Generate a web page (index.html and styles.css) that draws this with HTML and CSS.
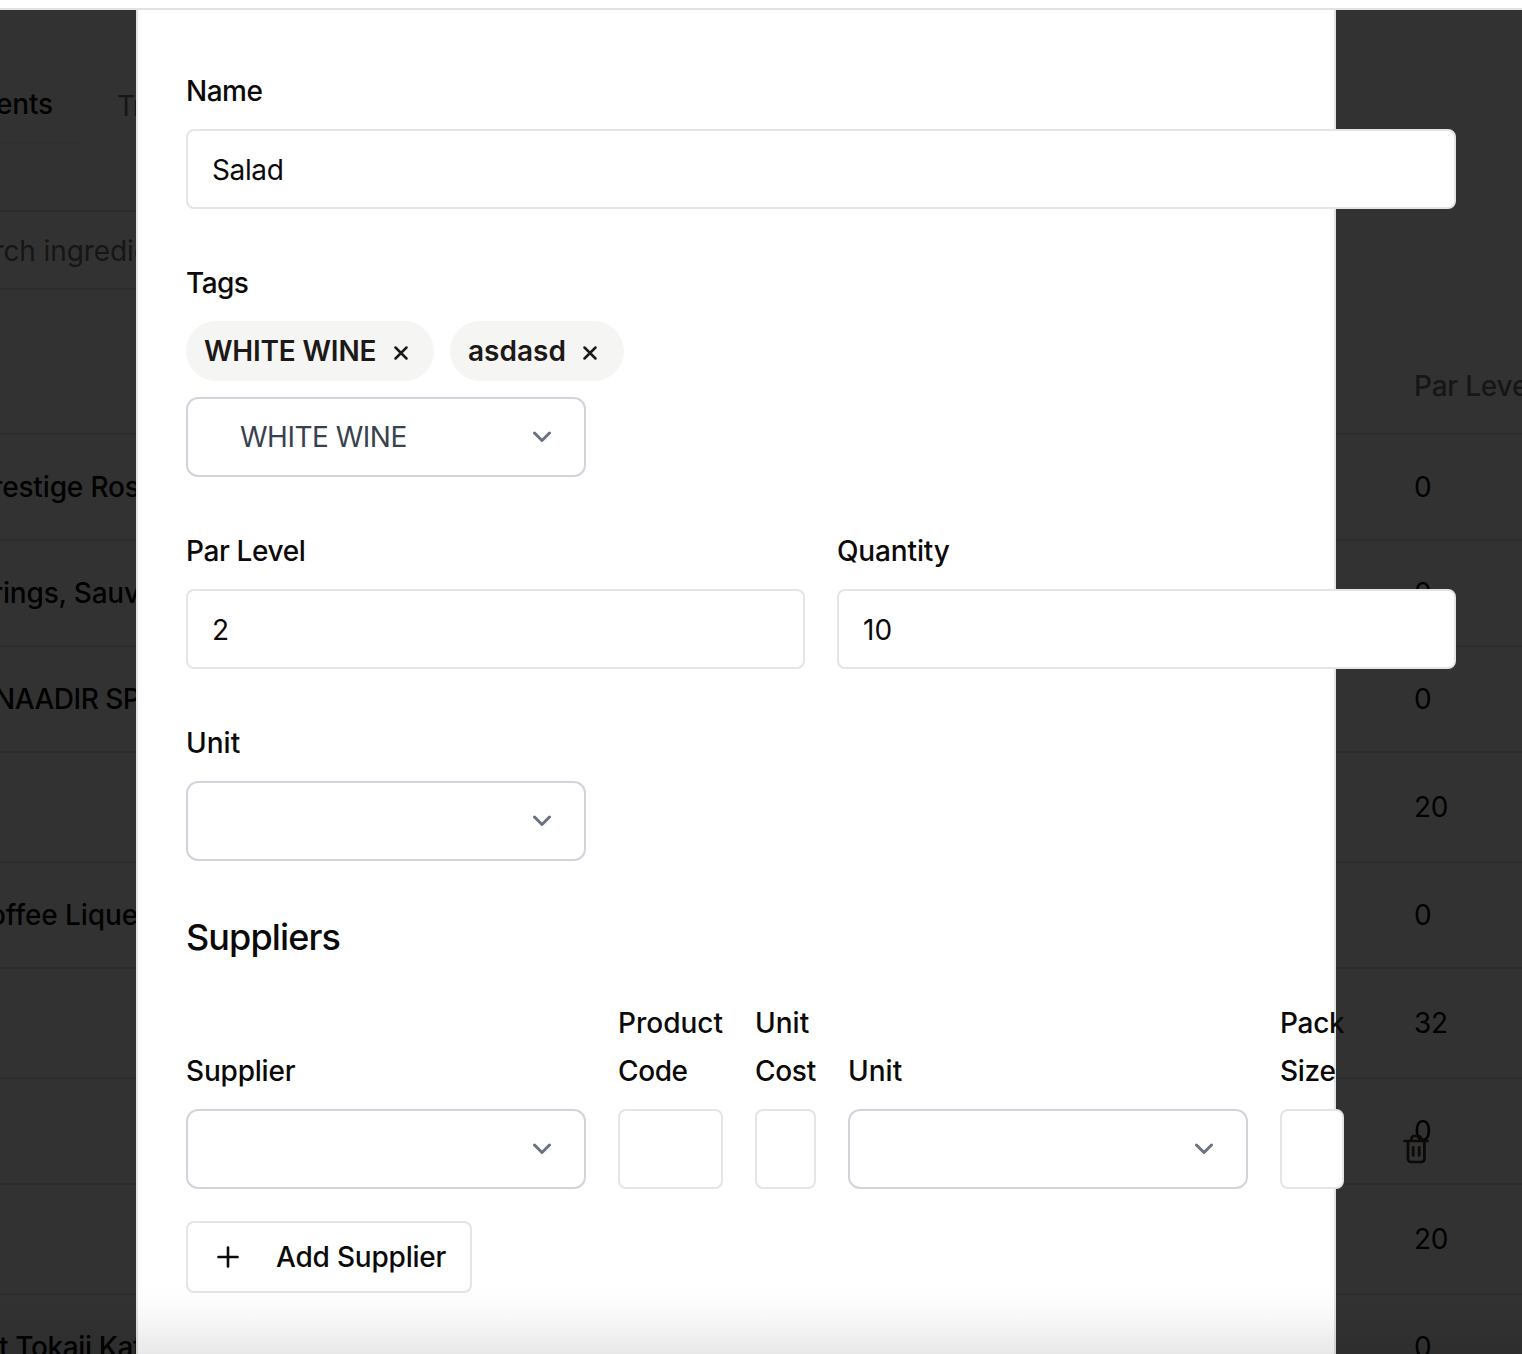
FILE: index.html
```html
<!DOCTYPE html>
<html lang="en">
<head>
<meta charset="utf-8">
<title>Edit ingredient</title>
<link rel="stylesheet" href="styles.css">
</head>
<body>
<header class="topbar"></header>
<div class="stage">
  <main class="page">
    <nav class="tabs"><span class="tab tab-active">ents</span><span class="tab tab-next">Tr</span></nav>
    <div class="search">rch ingredie</div>
    <div class="table">
      <div class="row head"><span></span><span>Par Level</span></div>
      <div class="row"><span class="cell c1">restige Ros</span><span class="num">0</span></div>
      <div class="row"><span class="cell c2">rings, Sauv</span><span class="num">0</span></div>
      <div class="row"><span class="cell c3">NAADIR SP</span><span class="num">0</span></div>
      <div class="row tall"><span></span><span class="num">20</span></div>
      <div class="row"><span class="cell c4">offee Lique</span><span class="num">0</span></div>
      <div class="row tall"><span></span><span class="num">32</span></div>
      <div class="row"><span></span><span class="num">0</span></div>
      <div class="row tall"><span></span><span class="num">20</span></div>
      <div class="row"><span class="cell c5">t Tokaji Kat</span><span class="num">0</span></div>
    </div>
  </main>
  <div class="overlay"></div>
  <section class="dialog">
    <form class="form">
      <div class="field">
        <label class="ls-5">Name</label>
        <div class="input ls-4">Salad</div>
      </div>
      <div class="field">
        <label class="ls-6">Tags</label>
        <div class="chips">
          <span class="chip"><span class="ls-2">WHITE WINE</span><svg class="x" viewBox="0 0 14 14"><path d="M1.500 1.500 12.500 12.500M12.500 1.500 1.500 12.500"/></svg></span>
          <span class="chip"><span>asdasd</span><svg class="x" viewBox="0 0 14 14"><path d="M1.500 1.500 12.500 12.500M12.500 1.500 1.500 12.500"/></svg></span>
        </div>
        <div class="select"><span class="ls-5">WHITE WINE</span><svg class="chev" viewBox="0 0 20 12"><path d="M2.500 2 10 9.500 17.500 2"/></svg></div>
      </div>
      <div class="pair">
        <div class="field">
          <label class="ls-4">Par Level</label>
          <div class="input">2</div>
        </div>
        <div class="field">
          <label class="ls-1">Quantity</label>
          <div class="input">10</div>
        </div>
      </div>
      <div class="field">
        <label>Unit</label>
        <div class="select"><svg class="chev" viewBox="0 0 20 12"><path d="M2.500 2 10 9.500 17.500 2"/></svg></div>
      </div>
      <h2>Suppliers</h2>
      <div class="supplier">
        <div class="field"><label class="ls-2">Supplier</label><div class="select"><svg class="chev" viewBox="0 0 20 12"><path d="M2.500 2 10 9.500 17.500 2"/></svg></div></div>
        <div class="field"><label>Product<br><span class="ls-4">Code</span></label><div class="input"></div></div>
        <div class="field"><label>Unit<br><span class="ls-3">Cost</span></label><div class="input"></div></div>
        <div class="field"><label>Unit</label><div class="select"><svg class="chev" viewBox="0 0 20 12"><path d="M2.500 2 10 9.500 17.500 2"/></svg></div></div>
        <div class="field"><label class="ls-3">Pack<br>Size</label><div class="input"></div></div>
        <div class="remove"><svg class="trash" viewBox="0 0 28 32"><path d="M2.600 8h23M6 8v18a3 3 0 0 0 3 3h10.400a3 3 0 0 0 3-3V8M9.300 7.500V6a3 3 0 0 1 3-3h4.100a3 3 0 0 1 3 3v1.500M11.200 14.400v8M17.200 14.400v8"/></svg></div>
      </div>
      <div class="add"><svg class="plus" viewBox="0 0 24 24"><path d="M12 2.500v19M2.500 12h19"/></svg><span class="ls-2">Add Supplier</span></div>
    </form>
  </section>
  <div class="fade"></div>
</div>
</body>
</html>
```
FILE: styles.css
```css
* { box-sizing: border-box; }
body {
  margin: 0;
  height: 1354px;
  overflow: hidden;
  background: #fff;
  color: #0c0a09;
  font: 400 28px/48px Inter, "Liberation Sans", sans-serif;
}

/* tracking steps, in tenths of a pixel */
.ls-1 { letter-spacing: -.15px; }
.ls-2 { letter-spacing: -.2px; }
.ls-3 { letter-spacing: -.3px; }
.ls-4 { letter-spacing: -.38px; }
.ls-5 { letter-spacing: -.5px; }
.ls-6 { letter-spacing: -.6px; }

.topbar { height: 10px; background: #fff; border-bottom: 2px solid #e1e1e1; }
.stage { position: relative; height: 1344px; overflow: hidden; }

/* ingredient list behind the dialog */
.page { height: 1344px; overflow: hidden; white-space: nowrap; }
.tabs {
  display: flex;
  height: 134px;
  padding-top: 70px;
  background: linear-gradient(#f3f2f1, #f3f2f1) 0 132px / 84px 2px no-repeat;
}
.tab { width: 118px; height: 48px; color: #78716c; }
.tab-active { margin-left: -4px; width: 121px; color: #0c0a09; font-weight: 500; letter-spacing: -.2px; }
.tab-next { padding-top: 2px; letter-spacing: -.8px; }
.search {
  width: 600px;
  height: 80px;
  margin-top: 66px;
  border: solid #e7e5e4;
  border-width: 2px 0;
  padding-top: 15px;
  color: #78716c;
  letter-spacing: -.1px;
  text-indent: -6.5px;
}
.table { margin-top: 46px; border-top: 1px solid #f3f2f1; }
.row {
  display: grid;
  grid-template-columns: 1414px 1fr;
  align-items: center;
  height: 106px;
  border-bottom: 2px solid #e7e5e4;
}
.row.tall { height: 110px; }
.row.head { height: 98px; padding-top: 2px; color: #78716c; font-weight: 500; letter-spacing: -.2px; }
.num { letter-spacing: -.4px; }
.cell { font-weight: 500; }
.c1 { margin-left: -8px; letter-spacing: -.15px; }
.c2 { margin-left: -8px; letter-spacing: -.2px; }
.c3 { margin-left: -6px; letter-spacing: -.5px; }
.c4 { margin-left: -11px; letter-spacing: -.1px; }
.c5 { margin-left: -1px; letter-spacing: -.38px; }
.overlay { position: absolute; inset: 0; background: rgba(0, 0, 0, .803); }

/* dialog */
.dialog {
  position: absolute;
  top: 0;
  left: 136px;
  width: 1200px;
  height: 1344px;
  padding: 57px 48px 0;
  border: solid #e3e3e2;
  border-width: 0 2px;
  background: #fff;
}
.form { width: 1270px; display: flex; flex-direction: column; gap: 50px; }
.field { min-width: 0; }
label { display: block; margin-bottom: 14px; font-weight: 500; }
.input, .select {
  display: flex;
  align-items: center;
  height: 80px;
  padding: 2px 24px 0;
  border: 2px solid #e5e5e5;
  border-radius: 8px;
  background: #fff;
}
.select {
  justify-content: flex-end;
  width: 400px;
  padding: 0 32px 0 52px;
  border-color: #d1d5db;
  border-radius: 12px;
  color: #374151;
}
.select > span { margin-right: auto; }
.chev { width: 20px; height: 12px; fill: none; stroke: #6b7280; stroke-width: 3; stroke-linecap: round; stroke-linejoin: round; }
.chips { display: flex; gap: 16px; margin-bottom: 16px; }
.chip {
  display: flex;
  align-items: center;
  justify-content: space-between;
  width: 248px;
  height: 60px;
  padding: 0 26.5px 0 18px;
  border-radius: 30px;
  background: #f5f5f4;
  color: #1c1917;
  font-weight: 600;
}
.chip + .chip { width: 174px; padding-right: 27.5px; }
.x { width: 14px; height: 14px; margin-top: 4px; fill: none; stroke: #1c1917; stroke-width: 2.5; stroke-linecap: round; }
.pair { display: grid; grid-template-columns: 1fr 1fr; gap: 32px; }
h2 {
  margin: 0 0 -12px;
  padding-top: 2px;
  font: 500 36px/48px Inter, "Liberation Sans", sans-serif;
  letter-spacing: -.9px;
}
.supplier {
  display: grid;
  grid-template-columns: 400px 105px 61px 400px 64px 80px;
  column-gap: 32px;
  align-items: end;
}
.remove { display: flex; align-items: center; justify-content: center; height: 80px; }
.trash { width: 28px; height: 32px; fill: none; stroke: #0c0a09; stroke-width: 2.7; stroke-linecap: round; }
.add {
  display: flex;
  align-items: center;
  width: 286px;
  height: 72px;
  margin-top: -18px;
  padding-left: 28px;
  border: 2px solid #e5e5e5;
  border-radius: 8px;
  font-weight: 500;
}
.plus { width: 24px; height: 24px; margin-right: 36px; fill: none; stroke: #0c0a09; stroke-width: 2.6; stroke-linecap: round; }
.fade {
  position: absolute;
  left: 0;
  right: 0;
  bottom: 0;
  height: 74px;
  background: linear-gradient(rgba(0, 0, 0, 0), rgba(0, 0, 0, .008) 25%, rgba(0, 0, 0, .028) 50%, rgba(0, 0, 0, .09));
}
```
